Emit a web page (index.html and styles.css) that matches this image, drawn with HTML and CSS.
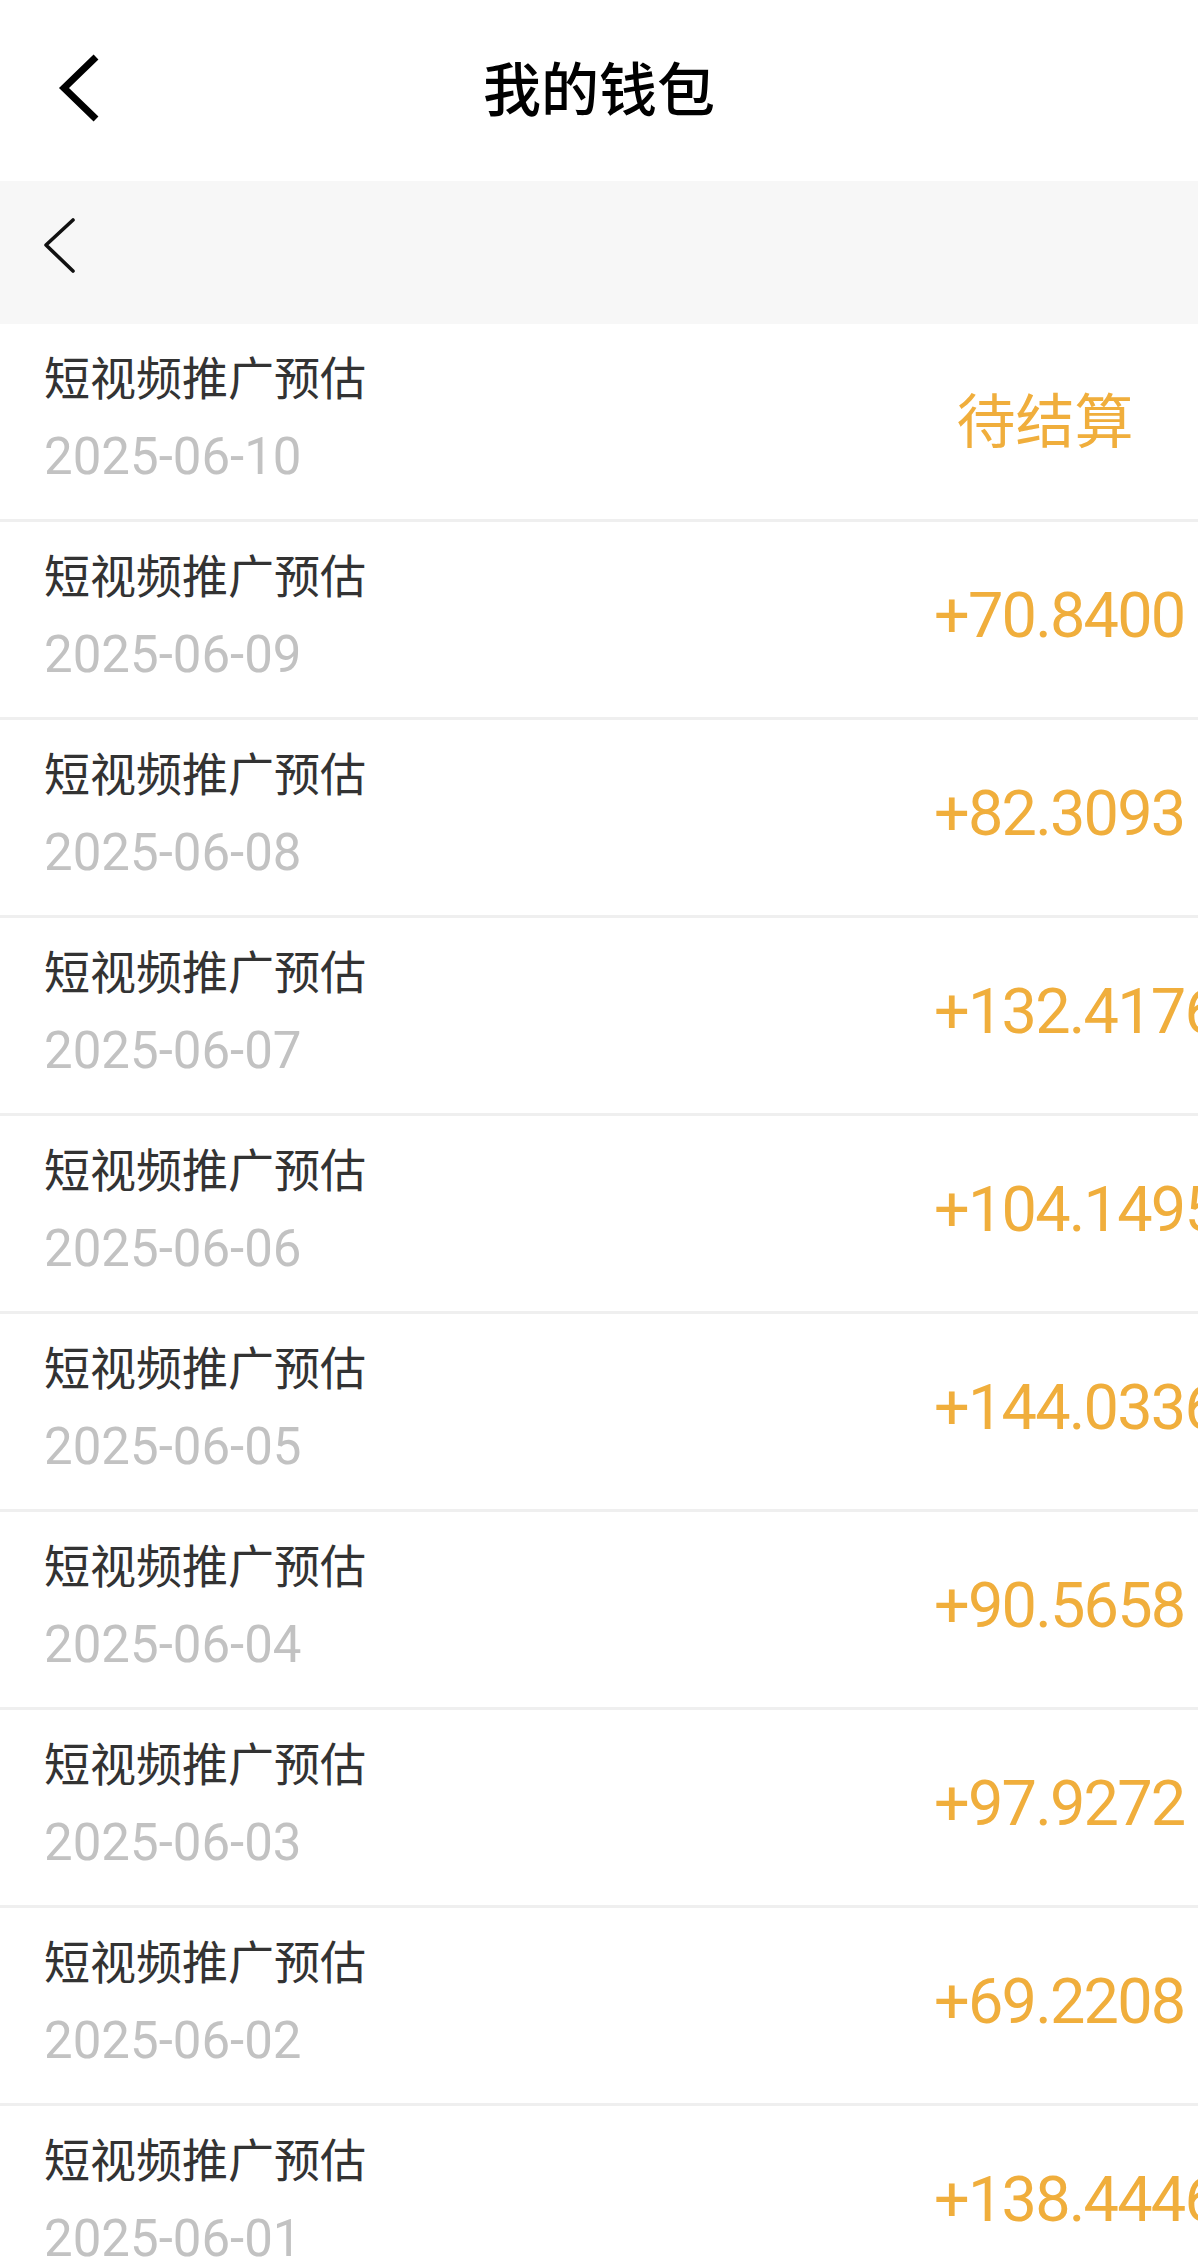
FILE: index.html
```html
<!DOCTYPE html>
<html lang="zh-CN">
<head>
  <meta charset="UTF-8">
  <meta name="viewport" content="width=device-width, initial-scale=1.0">
  <title>我的钱包</title>
  <link rel="stylesheet" href="styles.css">
</head>
<body>
<div class="page">
  <div class="header">
    <div class="back">
      <svg width="50" height="70" viewBox="0 0 50 70">
        <polyline points="41,4 9,35 41,66" fill="none" stroke="#000" stroke-width="7" stroke-linejoin="miter"/>
      </svg>
    </div>
    <h1 class="title">我的钱包</h1>
    <div></div>
  </div>

  <div class="subbar">
    <svg width="40" height="70" viewBox="0 0 40 70">
      <polyline points="33,10 6,35 33,61" fill="none" stroke="#111" stroke-width="3.6" stroke-linecap="round" stroke-linejoin="round"/>
    </svg>
  </div>

  <div class="list">
    <div class="row">
      <div class="info">
        <div class="name">短视频推广预估</div>
        <div class="date">2025-06-10</div>
      </div>
      <div class="amount status">待结算</div>
    </div>
    <div class="row">
      <div class="info">
        <div class="name">短视频推广预估</div>
        <div class="date">2025-06-09</div>
      </div>
      <div class="amount">+70.8400</div>
    </div>
    <div class="row">
      <div class="info">
        <div class="name">短视频推广预估</div>
        <div class="date">2025-06-08</div>
      </div>
      <div class="amount">+82.3093</div>
    </div>
    <div class="row">
      <div class="info">
        <div class="name">短视频推广预估</div>
        <div class="date">2025-06-07</div>
      </div>
      <div class="amount">+132.4176</div>
    </div>
    <div class="row">
      <div class="info">
        <div class="name">短视频推广预估</div>
        <div class="date">2025-06-06</div>
      </div>
      <div class="amount">+104.1495</div>
    </div>
    <div class="row">
      <div class="info">
        <div class="name">短视频推广预估</div>
        <div class="date">2025-06-05</div>
      </div>
      <div class="amount">+144.0336</div>
    </div>
    <div class="row">
      <div class="info">
        <div class="name">短视频推广预估</div>
        <div class="date">2025-06-04</div>
      </div>
      <div class="amount">+90.5658</div>
    </div>
    <div class="row">
      <div class="info">
        <div class="name">短视频推广预估</div>
        <div class="date">2025-06-03</div>
      </div>
      <div class="amount">+97.9272</div>
    </div>
    <div class="row">
      <div class="info">
        <div class="name">短视频推广预估</div>
        <div class="date">2025-06-02</div>
      </div>
      <div class="amount">+69.2208</div>
    </div>
    <div class="row">
      <div class="info">
        <div class="name">短视频推广预估</div>
        <div class="date">2025-06-01</div>
      </div>
      <div class="amount">+138.4446</div>
    </div>
  </div>
</div>
</body>
</html>
```

FILE: styles.css
```css
html, body {
  margin: 0;
  padding: 0;
  background: #ffffff;
}
.page {
  width: 1198px;
  height: 2260px;
  overflow: hidden;
  font-family: Roboto, "Noto Sans CJK SC", sans-serif;
}
.header {
  display: grid;
  grid-template-columns: 1fr auto 1fr;
  align-items: center;
  height: 181px;
  background: #ffffff;
}
.back {
  padding-left: 55px;
  display: flex;
  align-items: center;
}
.back svg {
  display: block;
  margin-top: -5px;
}
.title {
  margin: 0 0 10px;
  font-family: "Noto Sans CJK SC", sans-serif;
  font-size: 58px;
  font-weight: 500;
  color: #000;
  line-height: 1;
}
.subbar {
  height: 143px;
  background: #f7f7f7;
  padding: 29px 0 0 40px;
  box-sizing: border-box;
}
.subbar svg {
  display: block;
}
.row {
  display: grid;
  grid-template-columns: 1fr 222px;
  align-items: center;
  height: 195px;
  padding-right: 42px;
  border-bottom: 3px solid #efefef;
}
.info {
  align-self: start;
  padding: 28px 0 0 44px;
}
.name {
  font-family: "Noto Sans CJK SC", sans-serif;
  font-size: 46px;
  line-height: 46px;
  color: #333;
}
.date {
  margin-top: 33px;
  font-size: 51px;
  line-height: 51px;
  color: #c2c2c2;
}
.amount {
  text-align: center;
  white-space: nowrap;
  font-size: 63px;
  line-height: 63px;
  letter-spacing: -1.8px;
  color: #f0ae3c;
  padding-bottom: 8px;
}
.status {
  font-family: "Noto Sans CJK SC", sans-serif;
  font-size: 59px;
  letter-spacing: 0;
}
```
